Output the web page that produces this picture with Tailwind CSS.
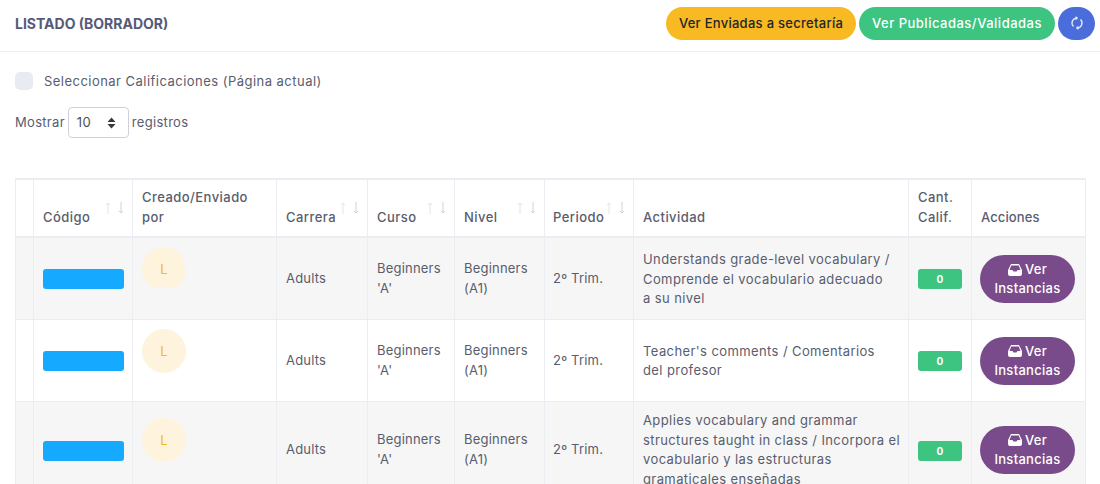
<!DOCTYPE html>
<html lang="es">
<head>
    <meta charset="UTF-8">
    <title>Listado (Borrador)</title>
    <script src="https://cdn.jsdelivr.net/npm/@tailwindcss/browser@4"></script>
</head>
<body class="bg-white font-['Inter',sans-serif] text-[13px] text-[#595d6e] overflow-hidden h-[484px]">
    <!-- cabecera -->
    <header class="h-[52px] border-b border-[#ebedf2] flex items-center justify-between pl-[15px] pr-[5px]">
        <h3 class="text-[14px] font-bold text-[#565a78] pb-[5px]">LISTADO (BORRADOR)</h3>
        <div class="flex items-center gap-[3px] pb-[5px]">
            <button class="h-[33px] w-[190px] pt-[2px] rounded-full bg-[#f8b923] text-[#212529] text-[13px] font-medium tracking-[0.28px]">Ver Enviadas a secretaría</button>
            <button class="h-[33px] w-[196px] pt-[2px] rounded-full bg-[#3cc480] text-white text-[13px] font-medium tracking-[0.5px]">Ver Publicadas/Validadas</button>
            <button class="h-[33px] w-[37px] rounded-full bg-[#4a6ddb] flex items-center justify-center">
                <svg class="w-[14px] h-[14px]" viewBox="0 0 16 16" fill="none" stroke="#e4eafc" stroke-width="1.500"><path d="M4 12A5.600 5.600 0 0 1 8 2.400M6.400 0.800 8.200 2.400 6.400 4M12 4A5.600 5.600 0 0 1 8 13.600M9.600 12 7.800 13.600 9.600 15.200"/></svg>
            </button>
        </div>
    </header>

    <!-- filtros -->
    <div class="px-[15px]">
        <label class="flex items-center gap-[11px] mt-[20px] h-[18px]">
            <span class="w-[18px] h-[18px] rounded-[5px] bg-[#e9ebf3]"></span>
            <span class="text-[13px] tracking-[0.47px] pt-[2px]">Seleccionar Calificaciones (Página actual)</span>
        </label>
        <div class="flex items-center gap-[3px] mt-[17px] h-[31px] tracking-[0.3px]">
            <span>Mostrar</span>
            <div class="w-[61px] h-[31px] border border-[#cdd1dd] rounded-[4px] flex items-center justify-between pl-[8px] pr-[12px] text-[#495057]">
                <span>10</span>
                <svg class="w-[9px] h-[12px]" viewBox="0 0 9 12" fill="#343a40"><path d="M4.500 0.500 8.500 5H0.500zM4.500 11.500 0.500 7h8z"/></svg>
            </div>
            <span>registros</span>
        </div>

        <!-- tabla -->
        <table class="mt-[40px] w-[1070px] table-fixed border-collapse text-[13px] leading-[20px]">
            <colgroup>
                <col class="w-[18px]"><col class="w-[99px]"><col class="w-[144px]"><col class="w-[91px]"><col class="w-[87px]"><col class="w-[90px]"><col class="w-[89px]"><col class="w-[275px]"><col class="w-[63px]"><col class="w-[114px]">
            </colgroup>
            <thead class="tracking-[0.45px]">
                <tr class="h-[58px] border-t-2 border-[#ebedf2] align-bottom">
                    <th class="border border-b-2 border-[#ebedf2]"></th>
                    <th class="relative border border-b-2 border-[#ebedf2] px-[9px] pb-[9px] text-left font-medium">Código<svg class="absolute right-[9px] top-[22px] w-[18px] h-[12px]" viewBox="0 0 18 12" fill="none" stroke-width="1"><path stroke="#e2e4ea" d="M3 12V1M0.800 3.200 3 1l2.200 2.200"/><path stroke="#cfd2d9" d="M16 0v11M13.800 8.800 16 11l2.200-2.200"/></svg></th>
                    <th class="border border-b-2 border-[#ebedf2] px-[9px] pb-[9px] text-left font-medium">Creado/Enviado por</th>
                    <th class="relative border border-b-2 border-[#ebedf2] px-[9px] pb-[9px] text-left font-medium">Carrera<svg class="absolute right-[9px] top-[22px] w-[18px] h-[12px]" viewBox="0 0 18 12" fill="none" stroke-width="1"><path stroke="#e2e4ea" d="M3 12V1M0.800 3.200 3 1l2.200 2.200"/><path stroke="#cfd2d9" d="M16 0v11M13.800 8.800 16 11l2.200-2.200"/></svg></th>
                    <th class="relative border border-b-2 border-[#ebedf2] px-[9px] pb-[9px] text-left font-medium">Curso<svg class="absolute right-[9px] top-[22px] w-[18px] h-[12px]" viewBox="0 0 18 12" fill="none" stroke-width="1"><path stroke="#e2e4ea" d="M3 12V1M0.800 3.200 3 1l2.200 2.200"/><path stroke="#cfd2d9" d="M16 0v11M13.800 8.800 16 11l2.200-2.200"/></svg></th>
                    <th class="relative border border-b-2 border-[#ebedf2] px-[9px] pb-[9px] text-left font-medium">Nivel<svg class="absolute right-[9px] top-[22px] w-[18px] h-[12px]" viewBox="0 0 18 12" fill="none" stroke-width="1"><path stroke="#e2e4ea" d="M3 12V1M0.800 3.200 3 1l2.200 2.200"/><path stroke="#cfd2d9" d="M16 0v11M13.800 8.800 16 11l2.200-2.200"/></svg></th>
                    <th class="relative border border-b-2 border-[#ebedf2] pl-[8px] pb-[9px] text-left font-medium">Periodo<svg class="absolute right-[9px] top-[22px] w-[18px] h-[12px]" viewBox="0 0 18 12" fill="none" stroke-width="1"><path stroke="#e2e4ea" d="M3 12V1M0.800 3.200 3 1l2.200 2.200"/><path stroke="#cfd2d9" d="M16 0v11M13.800 8.800 16 11l2.200-2.200"/></svg></th>
                    <th class="border border-b-2 border-[#ebedf2] px-[9px] pb-[9px] text-left font-medium">Actividad</th>
                    <th class="border border-b-2 border-[#ebedf2] px-[9px] pb-[9px] text-left font-medium">Cant. Calif.</th>
                    <th class="border border-b-2 border-[#ebedf2] px-[9px] pb-[9px] text-left font-medium tracking-[0.1px]">Acciones</th>
                </tr>
            </thead>
            <tbody class="tracking-[0.2px]">
                <tr class="h-[82px] bg-[#f6f6f6]">
                    <td class="border border-[#ebedf2]"></td>
                    <td class="border border-[#ebedf2] pl-[9px] pr-[8px]"><div class="mt-[2px] h-[20px] rounded-[3px] bg-[#15aaff]"></div></td>
                    <td class="border border-[#ebedf2] px-[9px] align-top pt-[9px]"><div class="relative w-[44px] h-[41px] overflow-hidden"><div class="w-[44px] h-[44px] rounded-full bg-[#fef3dd] text-[#f8b923] flex items-center justify-center">L</div><span class="absolute right-[-5px] top-[10px] w-[8px] h-[11px] rounded-full bg-[#f6f6f6]"></span></div></td>
                    <td class="border border-[#ebedf2] px-[9px]">Adults</td>
                    <td class="border border-[#ebedf2] px-[9px]">Beginners 'A'</td>
                    <td class="border border-[#ebedf2] px-[9px]">Beginners (A1)</td>
                    <td class="border border-[#ebedf2] pl-[8px]">2º Trim.</td>
                    <td class="border border-[#ebedf2] pl-[9px] pr-[4px] pt-[2px] leading-[19.5px] tracking-[0.4px]">Understands grade-level vocabulary /<br>Comprende el vocabulario adecuado<br>a su nivel</td>
                    <td class="border border-[#ebedf2] px-[9px]"><div class="mt-[2px] h-[20px] rounded-[3px] bg-[#3cc480] text-white text-[10px] font-bold flex items-center justify-center">0</div></td>
                    <td class="border border-[#ebedf2] px-[8px]"><button class="block mt-[2px] w-[95px] h-[48px] rounded-[24px] bg-[#7a4b8a] text-white font-medium leading-[19px] tracking-[0.3px]"><svg class="inline w-[14px] h-[12px] mr-[3px] -mt-[2px]" viewBox="0 0 14 12" fill="#fff"><path d="M3 0h8l3 6v4a2 2 0 0 1-2 2H2a2 2 0 0 1-2-2V6zM3.200 1.600 1.600 6H4.500l1 1.600h3l1-1.600h2.900L10.800 1.600z" fill-rule="evenodd"/></svg>Ver Instancias</button></td>
                </tr>
                <tr class="h-[82px] bg-white">
                    <td class="border border-[#ebedf2]"></td>
                    <td class="border border-[#ebedf2] pl-[9px] pr-[8px]"><div class="mt-[2px] h-[20px] rounded-[3px] bg-[#15aaff]"></div></td>
                    <td class="border border-[#ebedf2] px-[9px] align-top pt-[9px]"><div class="w-[44px] h-[44px] rounded-full bg-[#fef3dd] text-[#f8b923] flex items-center justify-center">L</div></td>
                    <td class="border border-[#ebedf2] px-[9px]">Adults</td>
                    <td class="border border-[#ebedf2] px-[9px]">Beginners 'A'</td>
                    <td class="border border-[#ebedf2] px-[9px]">Beginners (A1)</td>
                    <td class="border border-[#ebedf2] pl-[8px]">2º Trim.</td>
                    <td class="border border-[#ebedf2] pl-[9px] pr-[4px] pt-[2px] leading-[19.5px] tracking-[0.4px]">Teacher's comments / Comentarios<br>del profesor</td>
                    <td class="border border-[#ebedf2] px-[9px]"><div class="mt-[2px] h-[20px] rounded-[3px] bg-[#3cc480] text-white text-[10px] font-bold flex items-center justify-center">0</div></td>
                    <td class="border border-[#ebedf2] px-[8px]"><button class="block mt-[2px] w-[95px] h-[48px] rounded-[24px] bg-[#7a4b8a] text-white font-medium leading-[19px] tracking-[0.3px]"><svg class="inline w-[14px] h-[12px] mr-[3px] -mt-[2px]" viewBox="0 0 14 12" fill="#fff"><path d="M3 0h8l3 6v4a2 2 0 0 1-2 2H2a2 2 0 0 1-2-2V6zM3.200 1.600 1.600 6H4.500l1 1.600h3l1-1.600h2.900L10.800 1.600z" fill-rule="evenodd"/></svg>Ver Instancias</button></td>
                </tr>
                <tr class="h-[96px] bg-[#f6f6f6]">
                    <td class="border border-[#ebedf2]"></td>
                    <td class="border border-[#ebedf2] pl-[9px] pr-[8px]"><div class="mt-[4px] h-[20px] rounded-[3px] bg-[#15aaff]"></div></td>
                    <td class="border border-[#ebedf2] px-[9px] align-top pt-[16px]"><div class="w-[44px] h-[44px] rounded-full bg-[#fef3dd] text-[#f8b923] flex items-center justify-center">L</div></td>
                    <td class="border border-[#ebedf2] px-[9px]">Adults</td>
                    <td class="border border-[#ebedf2] px-[9px]">Beginners 'A'</td>
                    <td class="border border-[#ebedf2] px-[9px]">Beginners (A1)</td>
                    <td class="border border-[#ebedf2] pl-[8px]">2º Trim.</td>
                    <td class="border border-[#ebedf2] pl-[9px] pr-[4px] pt-[2px] leading-[19.5px] tracking-[0.4px]">Applies vocabulary and grammar<br>structures taught in class / Incorpora el<br>vocabulario y las estructuras<br>gramaticales enseñadas</td>
                    <td class="border border-[#ebedf2] px-[9px]"><div class="mt-[4px] h-[20px] rounded-[3px] bg-[#3cc480] text-white text-[10px] font-bold flex items-center justify-center">0</div></td>
                    <td class="border border-[#ebedf2] px-[8px]"><button class="block mt-[2px] w-[95px] h-[48px] rounded-[24px] bg-[#7a4b8a] text-white font-medium leading-[19px] tracking-[0.3px]"><svg class="inline w-[14px] h-[12px] mr-[3px] -mt-[2px]" viewBox="0 0 14 12" fill="#fff"><path d="M3 0h8l3 6v4a2 2 0 0 1-2 2H2a2 2 0 0 1-2-2V6zM3.200 1.600 1.600 6H4.500l1 1.600h3l1-1.600h2.900L10.800 1.600z" fill-rule="evenodd"/></svg>Ver Instancias</button></td>
                </tr>
            </tbody>
        </table>
    </div>
</body>
</html>
